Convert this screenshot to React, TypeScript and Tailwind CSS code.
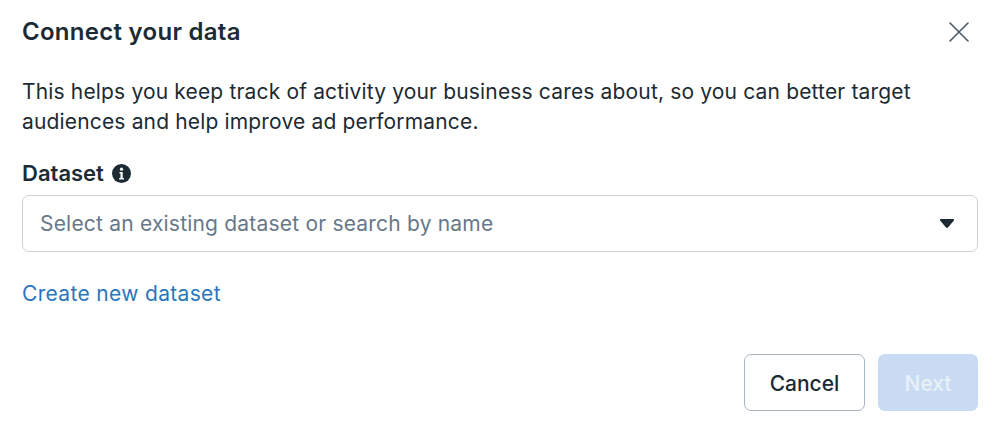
export default function App() {
  return (
    <div className="flex h-[432px] w-[998px] flex-col bg-white pl-[22px] pr-5 font-['Inter',sans-serif] text-[#1c2b33]">
      <div className="flex h-[64px] items-center justify-between">
        <h2 className="text-[24px] font-semibold tracking-[0.28px]">Connect your data</h2>
        <button type="button" className="mr-[9px] text-[#465a69]" aria-label="Close">
          <svg width="20" height="20" viewBox="0 0 20 20" aria-hidden="true">
            <path d="M1 1l18 18M19 1L1 19" stroke="currentColor" strokeWidth="1.6" strokeLinecap="round" />
          </svg>
        </button>
      </div>
      <p className="mt-[13px] text-[21px] leading-[30px] tracking-[0.16px]">
        This helps you keep track of activity your business cares about, so you can better target
        <br />
        audiences and help improve ad performance.
      </p>
      <div className="mt-[21px] flex h-[30px] items-center gap-[8px]">
        <span className="text-[22px] font-semibold">Dataset</span>
        <svg width="19" height="19" viewBox="0 0 19 19" aria-hidden="true">
          <circle cx="9.5" cy="9.5" r="9.5" fill="#1c2b33" />
          <circle cx="9.5" cy="5.2" r="1.6" fill="#fff" />
          <path d="M7.5 8h3.2v6h1.3v1.6H7.2V14h1.3V9.6h-1z" fill="#fff" />
        </svg>
      </div>
      <div className="mt-[7px] flex h-[57px] items-center justify-between rounded-[7px] border border-[#cbd2d9] pl-[17px] pr-[23px]">
        <span className="text-[21px] tracking-[0.2px] text-[#67788a]">Select an existing dataset or search by name</span>
        <svg width="14" height="9" viewBox="0 0 14 9" aria-hidden="true">
          <path d="M1 0h12c.9 0 1.3 1 .7 1.7L8.2 8.2c-.6.7-1.8.7-2.4 0L.3 1.7C-.3 1 .1 0 1 0z" fill="#1c2b33" />
        </svg>
      </div>
      <a className="mt-[27px] text-[21px] leading-[30px] tracking-[0.33px] text-[#2a76bb]">Create new dataset</a>
      <div className="mt-[45px] flex justify-end gap-[13px]">
        <button type="button" className="h-[57px] w-[121px] rounded-[7px] border border-[#a9b5c1] pt-[2px] text-[21px] font-medium">
          Cancel
        </button>
        <button type="button" className="h-[57px] w-[100px] rounded-[7px] bg-[#c8dbf2] pt-[2px] text-[21px] font-medium text-[#e9f1fa]">
          Next
        </button>
      </div>
    </div>
  );
}
